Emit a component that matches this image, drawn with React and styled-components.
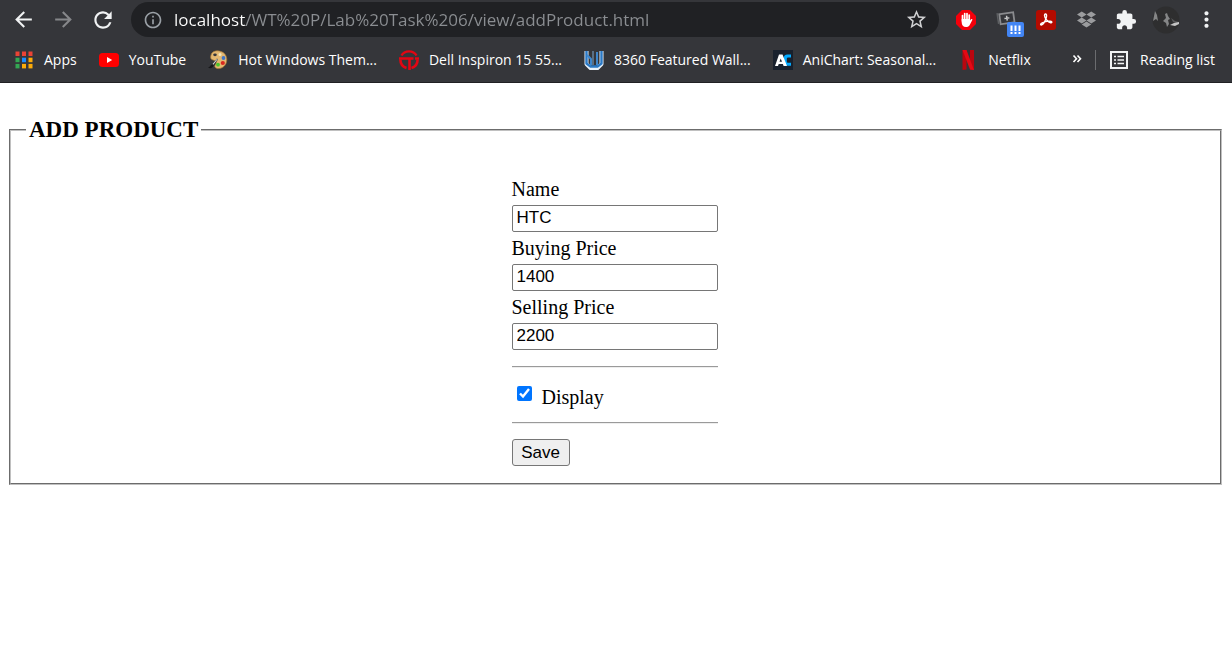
import React from "react";
import styled, { createGlobalStyle } from "styled-components";
import {
  MdArrowBack,
  MdArrowForward,
  MdRefresh,
  MdInfoOutline,
  MdStarBorder,
  MdExtension,
  MdMoreVert,
} from "react-icons/md";
import { FaDropbox } from "react-icons/fa";

const GlobalStyle = createGlobalStyle`
  * { box-sizing: border-box; }
  body {
    margin: 0;
    background: #fff;
    color: #000;
    font-family: "Liberation Serif", "Times New Roman", serif;
    font-size: 20px;
  }
`;

const Chrome = styled.header`
  background: #35363a;
  border-bottom: 1px solid #202124;
  color: #fff;
  font-family: "Open Sans", "Segoe UI", sans-serif;
`;

const Toolbar = styled.div`
  display: flex;
  align-items: center;
  height: 39px;
  padding: 0 6px 0 3px;
`;

const ToolButton = styled.button`
  display: flex;
  align-items: center;
  justify-content: center;
  flex: none;
  width: ${(p) => p.$width || 40}px;
  height: 36px;
  padding: 0;
  border: 0;
  background: none;
  color: ${(p) => p.$color || "#f1f3f4"};
`;

const AddressBar = styled.div`
  display: flex;
  align-items: center;
  flex: 1;
  min-width: 0;
  height: 35px;
  margin: 0 7px 0 8px;
  padding-left: 12px;
  border-radius: 18px;
  background: #202124;
  color: #9aa0a6;
`;

const Address = styled.input`
  flex: 1;
  min-width: 0;
  height: 30px;
  margin-left: 11px;
  padding: 0;
  border: 0;
  outline: 0;
  font: 17px "Open Sans", "Segoe UI", sans-serif;
  background: linear-gradient(to right, #fff 72px, #8b8e92 72px);
  background-clip: text;
  -webkit-background-clip: text;
  -webkit-text-fill-color: transparent;
`;

const BookmarkBar = styled.nav`
  display: flex;
  align-items: center;
  justify-content: space-between;
  height: 43px;
  padding: 0 17px 2px 14px;
`;

const BookmarkList = styled.div`
  display: flex;
  gap: 22px;
  min-width: 0;
  overflow: hidden;
`;

const Bookmark = styled.a`
  display: flex;
  align-items: center;
  flex: none;
  gap: 10px;
  height: 28px;
  color: #fff;
  font-size: 14px;
  line-height: 20px;
  text-decoration: none;
  white-space: nowrap;
`;

const BarEnd = styled.div`
  display: flex;
  align-items: center;
  flex: none;
`;

const MoreButton = styled.button`
  width: 36px;
  height: 28px;
  padding: 0;
  border: 0;
  background: none;
  color: #fff;
`;

const ReadingButton = styled.button`
  display: flex;
  align-items: center;
  gap: 11px;
  height: 20px;
  padding: 0 0 0 13px;
  border: 0;
  border-left: 1px solid #6b6c6f;
  background: none;
  color: #fff;
  font: 14px "Open Sans", "Segoe UI", sans-serif;
  white-space: nowrap;
`;

const Page = styled.main`
  padding: 32px 10px 0 9px;
`;

const Fieldset = styled.fieldset`
  margin: 0;
  padding: 28px 17px 17px 15px;
  border: 2px groove #c0c0c0;
`;

const Legend = styled.legend`
  padding: 0 3px;
  font-size: 23px;
  font-weight: bold;
  line-height: 30px;
`;

const Form = styled.form`
  width: 206px;
  margin: 0 auto;
`;

const Label = styled.label`
  display: block;
  line-height: 32px;
`;

const TextInput = styled.input`
  display: block;
  width: 100%;
  height: 27px;
  padding: 0 4px 2px;
  border: 1px solid #767676;
  border-radius: 2px;
  outline: 0;
  background: #fff;
  color: #000;
  font: 17px "Liberation Sans", Arial, sans-serif;
`;

const Rule = styled.hr`
  margin: 16px 0 15px;
  border: 0;
  border-top: 1px solid #9a9a9a;
  border-bottom: 1px solid #eeeeee;
`;

const CheckRow = styled.div`
  display: flex;
  align-items: flex-start;
  gap: 10px;
  height: 23px;
  line-height: 28px;
`;

const Check = styled.input`
  width: 15px;
  height: 15px;
  margin: 3px 0 0 5px;
`;

const SaveButton = styled.button`
  display: block;
  width: 58px;
  height: 27px;
  padding: 0;
  border: 1px solid #767676;
  border-radius: 3px;
  background: #efefef;
  color: #000;
  font: 17px "Liberation Sans", Arial, sans-serif;
`;

const AppsIcon = () => {
  const colors = ["#ea4335", "#ea4335", "#ea4335", "#34a853", "#1a8cff", "#fbab09", "#34a853", "#fbab09", "#fbab09"];
  return (
    <svg width="20" height="20" viewBox="0 0 20 20">
      {colors.map((c, i) => (
        <rect key={i} x={1.5 + (i % 3) * 6.5} y={1.5 + Math.floor(i / 3) * 6.2} width="4" height="4.500" fill={c} />
      ))}
    </svg>
  );
};

const YouTubeIcon = () => (
  <svg width="20" height="20" viewBox="0 0 20 20">
    <rect y="3" width="20" height="14" rx="3.5" fill="#f00" />
    <path d="M8 7l5.2 3L8 13z" fill="#fff" />
  </svg>
);

const PaletteIcon = () => (
  <svg width="20" height="20" viewBox="0 0 20 20">
    <path d="M3 5C4 1 9 0 13 1.500c5 1.500 7 7 5 12-2 4.500-7 6-10 4.500-2-1-1-3 0-4.500 1-2-1-3-3-3.500C3 9.500 2 8 3 5z" fill="#e3b872" stroke="#a87935" strokeWidth=".7" />
    <ellipse cx="7" cy="4.800" rx="1.800" ry="1.400" fill="#35363a" />
    <circle cx="12" cy="4.500" r="1.500" fill="#f4e6bc" />
    <circle cx="15.500" cy="8" r="1.900" fill="#3e75c8" />
    <circle cx="14.800" cy="13" r="2.100" fill="#d9281f" />
    <circle cx="10" cy="14.700" r="1.900" fill="#4bc62b" />
    <path d="M0 17.500c2 0 2-2.500 4-3l5-6 1 1-4.500 6C5 18 2 19 0 17.500z" fill="#17181a" />
    <path d="M4.500 14L9 8.700l.7.600-4.300 5.500z" fill="#d8d8d8" />
  </svg>
);

const DellIcon = () => (
  <svg width="20" height="20" viewBox="0 0 20 20" fill="none" stroke="#e30613">
    <path d="M2.500 5.500C5.500 0 14.500 0 17.500 5.500" strokeWidth="2.400" />
    <path d="M0 8.500h14.500M16 8.500h4" strokeWidth="2.600" />
    <path d="M1.400 9.500c0 4 2.300 7.300 6.100 8.500M18.600 9.500c0 4-2.300 7.300-6.100 8.500" strokeWidth="2.600" />
    <path d="M10.500 8v12" strokeWidth="2.600" />
  </svg>
);

const WallIcon = () => (
  <svg width="20" height="20" viewBox="0 0 20 20" fill="none" strokeLinejoin="round">
    <path d="M2.500 1v13l4 4h7l4-4V1" stroke="#e9f2fb" strokeWidth="4" />
    <path d="M2.500 1v12.500l4 3h7l4-3V1" stroke="#2b79c4" strokeWidth="2.400" />
    <path d="M3 5l4 4v6M13 15V2" stroke="#3f87cc" strokeWidth="2" />
    <path d="M9 1v14" stroke="#7fa8cf" strokeWidth="1" />
  </svg>
);

const AniIcon = () => (
  <svg width="20" height="20" viewBox="0 0 20 20">
    <rect width="20" height="20" fill="#19212d" />
    <path d="M18 6.500V4.500h-3.500c-2.500 0-3.800 1.600-3.800 4v3c0 2.800 1.600 4.200 4.300 4.200h3v-3h-2.700c-1 0-1.500-.500-1.500-1.500V9c0-1 .500-1.500 1.500-1.500H18z" fill="#02a9ff" />
    <path d="M6 4.500h3.500L14 16h-3.400l-.7-2H5.700L5 16H2zm1.700 4l-1.200 3.300H9z" fill="#fff" fillRule="evenodd" />
  </svg>
);

const NetflixIcon = () => (
  <svg width="20" height="20" viewBox="0 0 20 20">
    <path d="M4.500 0h4v19.500l-4 .5zM12 0h4v20l-4-.5z" fill="#b9060f" />
    <path d="M4.500 0h4L16 20l-4-.5z" fill="#e50914" />
  </svg>
);

const ReadingIcon = () => (
  <svg width="20" height="20" viewBox="0 0 20 20" fill="none" stroke="#f1f3f4">
    <rect x="2" y="2" width="16" height="16" strokeWidth="2" />
    <path d="M5 6.500h2M5 10h2M5 13.500h2M8.500 6.500H15M8.500 10H15M8.500 13.500H15" strokeWidth="1.600" />
  </svg>
);

const AdblockIcon = () => (
  <svg width="20" height="20" viewBox="0 0 20 20">
    <path d="M6 0h8l6 6v8l-6 6H6l-6-6V6z" fill="#f4000b" />
    <path d="M6.500 11V5.500M8.700 10V3.500M11 10V3.500M13.200 10V5" stroke="#fff" strokeWidth="1.700" strokeLinecap="round" />
    <path d="M5.700 9h8.300v1.500l1-1.200c.7-.7 1.700 0 1.300.8L13.700 15c-.8 1.500-2 2-3.700 2-2.800 0-4.300-1.800-4.300-4.500z" fill="#fff" />
  </svg>
);

const CaptureIcon = () => (
  <svg width="36" height="36" viewBox="0 0 36 36">
    <g transform="translate(6 7) rotate(-8 11 10)" fill="none" stroke="#8a8b8e">
      <path d="M6 4.500h14v10H6z" strokeWidth="1.800" />
      <path d="M4 3v11" stroke="#5d5f62" strokeWidth="1.500" />
      <path d="M13 7v5M10.500 9.500h5" stroke="#c8c9ca" strokeWidth="1.500" />
    </g>
    <rect x="19" y="20" width="17" height="15" rx="2" fill="#4285f4" />
    <path d="M23.500 23.500v5.500M27.500 23.500v5.500M31.500 23.500v5.500M23.500 30v2M27.500 30v2M31.500 30v2" stroke="#fff" strokeWidth="2" />
  </svg>
);

const AcrobatIcon = () => (
  <svg width="20" height="20" viewBox="0 0 20 20">
    <rect width="20" height="20" rx="3" fill="#b30b00" />
    <path d="M9.300 4c1.600-.5 1.500 2.500.7 4.600-.9 2.500-2.800 6.200-4.600 6.400-1.300.1-.9-1.400.7-2.100 2.600-1.300 5.700-2 8.200-1.700 2.300.3 1.800 1.700.3 1.500C12 12.300 8.700 8.500 8.500 5.500c0-.8.300-1.300.8-1.500z" fill="none" stroke="#fff" strokeWidth="1.400" />
  </svg>
);

const AvatarIcon = () => (
  <svg width="28" height="28" viewBox="0 0 28 28">
    <circle cx="14" cy="14" r="13.500" fill="#2e2e2f" />
    <path d="M1 15l2-10 2 4 1 6-2-2z" fill="#858687" />
    <path d="M13 8l2-1 1 3 2 3-2 1 1 4-2 3-1-4-3-2 3-3z" fill="#858687" />
    <path d="M19 12l4 3 4 1v2l-6-2z" fill="#58595a" />
    <path d="M18 19l4-2 5-1v2l-4 2z" fill="#c4c4c4" />
  </svg>
);

const ChevronsIcon = () => (
  <svg width="10" height="10" viewBox="0 0 10 10" fill="none" stroke="#fff" strokeWidth="1.600">
    <path d="M1.500 1.500L4.500 4.700 1.500 8M5.500 1.500l3 3.200L5.500 8" />
  </svg>
);

const bookmarks = [
  ["Apps", AppsIcon],
  ["YouTube", YouTubeIcon],
  ["Hot Windows Them...", PaletteIcon],
  ["Dell Inspiron 15 55...", DellIcon],
  ["8360 Featured Wall...", WallIcon],
  ["AniChart: Seasonal...", AniIcon],
  ["Netflix", NetflixIcon],
];

const fields = [
  ["name", "Name", "HTC"],
  ["buying", "Buying Price", "1400"],
  ["selling", "Selling Price", "2200"],
];

export default function App() {
  return (
    <>
      <GlobalStyle />
      <Chrome>
        <Toolbar>
          <ToolButton aria-label="Back"><MdArrowBack size={25} /></ToolButton>
          <ToolButton aria-label="Forward" $color="#86878a"><MdArrowForward size={25} /></ToolButton>
          <ToolButton aria-label="Reload"><MdRefresh size={26} /></ToolButton>
          <AddressBar>
            <MdInfoOutline size={20} />
            <Address aria-label="Address" defaultValue="localhost/WT%20P/Lab%20Task%206/view/addProduct.html" />
            <ToolButton aria-label="Bookmark this page" $width={46} $color="#d0d1d3"><MdStarBorder size={23} /></ToolButton>
          </AddressBar>
          <ToolButton aria-label="Ad blocker"><AdblockIcon /></ToolButton>
          <ToolButton aria-label="Capture"><CaptureIcon /></ToolButton>
          <ToolButton aria-label="Acrobat"><AcrobatIcon /></ToolButton>
          <ToolButton aria-label="Dropbox" $color="#9b9c9e"><FaDropbox size={19} /></ToolButton>
          <ToolButton aria-label="Extensions"><MdExtension size={22} /></ToolButton>
          <ToolButton aria-label="Profile"><AvatarIcon /></ToolButton>
          <ToolButton aria-label="Menu"><MdMoreVert size={25} /></ToolButton>
        </Toolbar>
        <BookmarkBar>
          <BookmarkList>
            {bookmarks.map(([name, Icon]) => (
              <Bookmark key={name} href="#"><Icon />{name}</Bookmark>
            ))}
          </BookmarkList>
          <BarEnd>
            <MoreButton aria-label="More bookmarks"><ChevronsIcon /></MoreButton>
            <ReadingButton><ReadingIcon />Reading list</ReadingButton>
          </BarEnd>
        </BookmarkBar>
      </Chrome>
      <Page>
        <Fieldset>
          <Legend>ADD PRODUCT</Legend>
          <Form onSubmit={(e) => e.preventDefault()}>
            {fields.map(([id, label, value]) => (
              <React.Fragment key={id}>
                <Label htmlFor={id}>{label}</Label>
                <TextInput id={id} defaultValue={value} />
              </React.Fragment>
            ))}
            <Rule />
            <CheckRow>
              <Check type="checkbox" id="display" defaultChecked />
              <label htmlFor="display">Display</label>
            </CheckRow>
            <Rule />
            <SaveButton type="submit">Save</SaveButton>
          </Form>
        </Fieldset>
      </Page>
    </>
  );
}
